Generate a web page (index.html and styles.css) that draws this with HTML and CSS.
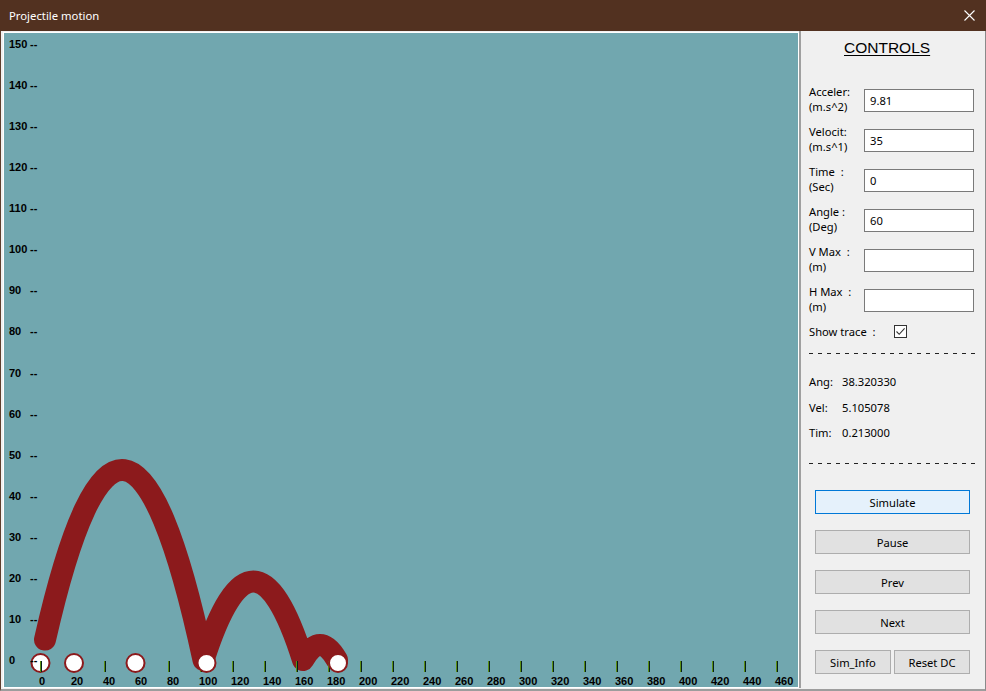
FILE: index.html
```html
<!DOCTYPE html>
<html>
<head>
<meta charset="utf-8">
<title>Projectile motion</title>
<link rel="stylesheet" href="styles.css">
</head>
<body>
<div class="window">
  <div class="titlebar">
    <span class="title">Projectile motion</span>
    <svg class="close" width="11" height="11" viewBox="0 0 11 11"><path d="M0.5 0.5L10.5 10.5M10.5 0.5L0.5 10.5" stroke="#fff" stroke-width="1.1" fill="none"/></svg>
  </div>
  <div class="main">
    <div class="plot-wrap">
      <div class="plot">
        <svg class="chart" width="794" height="654" viewBox="0 0 794 654">
          <g transform="translate(-4,-33)">
            <path class="trace" d="M45 639.6 Q124.25 290.6 203.5 660 Q253.5 503 303 660 Q320 630 337 660"/>
            <circle class="ball" cx="40.5" cy="663" r="9"/>
            <g class="axis">
              <text x="9" y="48">150</text><text x="30" y="48">--</text>
              <text x="9" y="89">140</text><text x="30" y="89">--</text>
              <text x="9" y="130">130</text><text x="30" y="130">--</text>
              <text x="9" y="171">120</text><text x="30" y="171">--</text>
              <text x="9" y="212">110</text><text x="30" y="212">--</text>
              <text x="9" y="253">100</text><text x="30" y="253">--</text>
              <text x="9" y="294">90</text><text x="30" y="294">--</text>
              <text x="9" y="335">80</text><text x="30" y="335">--</text>
              <text x="9" y="377">70</text><text x="30" y="377">--</text>
              <text x="9" y="418">60</text><text x="30" y="418">--</text>
              <text x="9" y="459">50</text><text x="30" y="459">--</text>
              <text x="9" y="500">40</text><text x="30" y="500">--</text>
              <text x="9" y="541">30</text><text x="30" y="541">--</text>
              <text x="9" y="582">20</text><text x="30" y="582">--</text>
              <text x="9" y="623">10</text><text x="30" y="623">--</text>
              <text x="9" y="664">0</text><text x="30" y="664">--</text>
            </g>
            <path class="tick-g" d="M40.5 661v11M72.5 661v11M104.5 661v11M136.5 661v11M168.5 661v11M200.5 661v11M232.5 661v11M264.5 661v11M296.5 661v11M328.5 661v11M360.5 661v11M392.5 661v11M424.5 661v11M456.5 661v11M488.5 661v11M520.5 661v11M552.5 661v11M584.5 661v11M616.5 661v11M648.5 661v11M680.5 661v11M712.5 661v11M744.5 661v11M776.5 661v11"/>
            <path class="tick-k" d="M41.5 661v11M73.5 661v11M105.5 661v11M137.5 661v11M169.5 661v11M201.5 661v11M233.5 661v11M265.5 661v11M297.5 661v11M329.5 661v11M361.5 661v11M393.5 661v11M425.5 661v11M457.5 661v11M489.5 661v11M521.5 661v11M553.5 661v11M585.5 661v11M617.5 661v11M649.5 661v11M681.5 661v11M713.5 661v11M745.5 661v11M777.5 661v11"/>
            <g class="axis">
              <text x="39" y="685">0</text>
              <text x="71" y="685">20</text>
              <text x="103" y="685">40</text>
              <text x="135" y="685">60</text>
              <text x="167" y="685">80</text>
              <text x="199" y="685">100</text>
              <text x="231" y="685">120</text>
              <text x="263" y="685">140</text>
              <text x="295" y="685">160</text>
              <text x="327" y="685">180</text>
              <text x="359" y="685">200</text>
              <text x="391" y="685">220</text>
              <text x="423" y="685">240</text>
              <text x="455" y="685">260</text>
              <text x="487" y="685">280</text>
              <text x="519" y="685">300</text>
              <text x="551" y="685">320</text>
              <text x="583" y="685">340</text>
              <text x="615" y="685">360</text>
              <text x="647" y="685">380</text>
              <text x="679" y="685">400</text>
              <text x="711" y="685">420</text>
              <text x="743" y="685">440</text>
              <text x="775" y="685">460</text>
            </g>
            <circle class="ball" cx="74" cy="663" r="9"/>
            <circle class="ball" cx="135.5" cy="663" r="9"/>
            <circle class="ball" cx="206.5" cy="663" r="9"/>
            <circle class="ball" cx="338" cy="663" r="9"/>
          </g>
        </svg>
      </div>
    </div>
    <div class="sep"></div>
    <div class="panel">
      <div class="ctl-title">CONTROLS</div>
      <div class="fields">
        <div class="field"><div class="lbl">Acceler:<br>(m.s^2)</div><div class="inp">9.81</div></div>
        <div class="field"><div class="lbl">Velocit:<br>(m.s^1)</div><div class="inp">35</div></div>
        <div class="field"><div class="lbl">Time&nbsp;&nbsp;:<br>(Sec)</div><div class="inp">0</div></div>
        <div class="field"><div class="lbl">Angle&nbsp;:<br>(Deg)</div><div class="inp">60</div></div>
        <div class="field"><div class="lbl">V Max&nbsp;&nbsp;:<br>(m)</div><div class="inp"></div></div>
        <div class="field"><div class="lbl">H Max&nbsp;&nbsp;:<br>(m)</div><div class="inp"></div></div>
      </div>
      <div class="trace-row">
        <span class="trace-lbl">Show trace&nbsp;&nbsp;:</span>
        <span class="check"><svg width="11" height="11" viewBox="0 0 11 11"><path d="M1.5 5.5L4.2 8.3L9.6 2.4" stroke="#333" stroke-width="1.1" fill="none"/></svg></span>
      </div>
      <div class="dash first"></div>
      <div class="stats">
        <div class="stat"><span class="sk">Ang:</span><span>38.320330</span></div>
        <div class="stat"><span class="sk">Vel:</span><span>5.105078</span></div>
        <div class="stat"><span class="sk">Tim:</span><span>0.213000</span></div>
      </div>
      <div class="dash second"></div>
      <div class="buttons">
        <div class="btn primary">Simulate</div>
        <div class="btn">Pause</div>
        <div class="btn">Prev</div>
        <div class="btn">Next</div>
        <div class="btn-pair">
          <div class="btn">Sim_Info</div>
          <div class="btn">Reset DC</div>
        </div>
      </div>
    </div>
  </div>
</div>
</body>
</html>
```

FILE: styles.css
```css
* { box-sizing: border-box; }
html, body { margin: 0; padding: 0; background: #f0f0f0; }
body { font-family: "Noto Sans", "Liberation Sans", sans-serif; }

.window {
  width: 986px;
  height: 691px;
  display: flex;
  flex-direction: column;
  overflow: hidden;
}

.titlebar {
  height: 31px;
  flex: none;
  background: #523120;
  color: #fff;
  display: flex;
  align-items: center;
  justify-content: space-between;
  padding: 0 11px 0 9px;
}
.title { font-size: 11.3px; line-height: 15px; }
.close { display: block; }

.main {
  height: 660px;
  display: flex;
  background: #f0f0f0;
  border-left: 1px solid #5d3f2e;
  border-right: 1px solid #8a8a8a;
  border-bottom: 2px solid #9d9d9d;
  padding-bottom: 1px;
}

.plot-wrap { padding: 1px 0 0 2px; }
.plot {
  width: 796px;
  height: 656px;
  border: 1px solid #ffffff;
  background: #71a7af;
}
.chart { display: block; }
.trace {
  fill: none;
  stroke: #8c1a1c;
  stroke-width: 22;
  stroke-linecap: round;
  stroke-linejoin: round;
}
.ball { fill: #ffffff; stroke: #8c1a1c; stroke-width: 2; }
.axis text {
  font-family: "Liberation Sans", Arial, sans-serif;
  font-weight: bold;
  font-size: 11px;
  fill: #000;
}
.tick-g { stroke: #5a8f14; stroke-width: 1; fill: none; }
.tick-k { stroke: #06201c; stroke-width: 1; fill: none; }

.sep { width: 2px; background: #a0a0a0; flex: none; }

.panel {
  width: 184px;
  flex: none;
  padding: 8px 11px 0 8px;
  font-size: 11.2px;
  color: #000;
}
.ctl-title {
  font-family: "Liberation Sans", Arial, sans-serif;
  font-size: 15.5px;
  line-height: 18px;
  text-decoration: underline;
  text-decoration-thickness: 1px;
  text-underline-offset: 2px;
  padding-left: 35px;
}
.fields { margin-top: 27px; }
.field {
  display: flex;
  height: 30px;
  margin-bottom: 10px;
}
.lbl { width: 55px; line-height: 15px; white-space: nowrap; }
.inp {
  width: 110px;
  height: 23px;
  margin-top: 5px;
  background: #fff;
  border: 1px solid #7a7a7a;
  padding-left: 5px;
  line-height: 21px;
}

.trace-row {
  display: flex;
  align-items: flex-start;
  height: 15px;
  line-height: 15px;
}
.trace-lbl { width: 85px; white-space: nowrap; }
.check {
  width: 13px;
  height: 13px;
  margin-top: 1px;
  border: 1px solid #333;
  background: #fff;
  display: flex;
  align-items: center;
  justify-content: center;
}
.check svg { display: block; }

.dash {
  width: 166px;
  height: 1px;
  background: repeating-linear-gradient(to right, #222 0 4px, transparent 4px 9px);
}
.dash.first { margin-top: 14px; }
.dash.second { margin-top: 23px; }

.stats {
  margin-top: 20px;
  display: flex;
  flex-direction: column;
  gap: 10.5px;
}
.stat { line-height: 15px; display: flex; white-space: nowrap; }
.sk { width: 33px; }

.buttons {
  margin-top: 26px;
  margin-left: 6px;
  width: 155px;
  display: flex;
  flex-direction: column;
  gap: 16px;
}
.btn {
  height: 24px;
  background: #e1e1e1;
  border: 1px solid #adadad;
  display: flex;
  align-items: center;
  justify-content: center;
  font-size: 11.2px;
}
.btn.primary { background: #e5f1fb; border-color: #0078d7; }
.btn-pair { display: flex; gap: 3px; }
.btn-pair .btn { flex: 1; }
```
